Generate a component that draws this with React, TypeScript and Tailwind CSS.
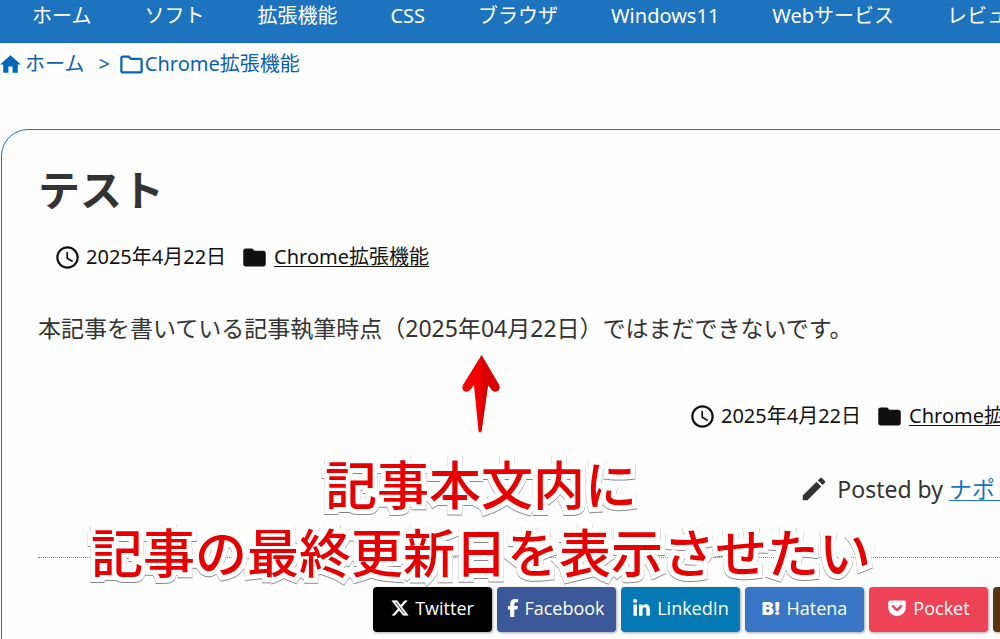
import type { ReactNode } from 'react';
import { MdAccessTime, MdEdit, MdFolder, MdHome, MdOutlineFolder } from 'react-icons/md';
import { FaFacebookF, FaGetPocket, FaLinkedinIn, FaXTwitter } from 'react-icons/fa6';

const NAV = ['ホーム', 'ソフト', '拡張機能', 'CSS', 'ブラウザ', 'Windows11', 'Webサービス', 'レビュー'];

const SHARES: { label: string; color: string; icon: ReactNode }[] = [
  { label: 'Twitter', color: 'bg-black', icon: <FaXTwitter size={18} strokeWidth={16} /> },
  { label: 'Facebook', color: 'bg-[#3b5998]', icon: <FaFacebookF size={18} className="-mx-1" /> },
  { label: 'LinkedIn', color: 'bg-[#0479b4]', icon: <FaLinkedinIn size={19} /> },
  {
    label: 'Hatena',
    color: 'bg-[#3875c4]',
    icon: <span className="font-['Inter',sans-serif] text-[18px] font-black">B!</span>,
  },
  { label: 'Pocket', color: 'bg-[#ee4257]', icon: <FaGetPocket size={20} /> },
];

function Meta({ className }: { className: string }) {
  return (
    <div className={`flex items-center text-[20px] leading-[30px] text-[#111] ${className}`}>
      <MdAccessTime size={27} className="mr-[5px]" />
      <time dateTime="2025-04-22">2025年4月22日</time>
      <MdFolder size={27} className="mr-[6px] ml-[15px]" />
      <a href="#chrome" className="underline decoration-1 underline-offset-2">Chrome拡張機能</a>
    </div>
  );
}

function Arrow() {
  return (
    <svg width="40" height="80" viewBox="0 0 40 80" aria-hidden="true">
      <path
        d="M20.5 1 L38 31 Q39.5 35 36.5 37 Q33 38.500 31 36 L27 31 L20.500 77 Q19 80 17.500 77 L13 31 L9 36 Q6 39 3 37 Q.5 35 2 31 Z"
        fill="#f40000"
      />
      <path
        d="M20.5 1 L38 31 Q39.5 35 36.5 37 Q33 38.500 31 36 L27 31 L20.500 77 L19.500 78 Z"
        fill="#d90000"
      />
    </svg>
  );
}

export default function App() {
  return (
    <div className="h-screen overflow-hidden bg-[#fefefe] font-['Noto_Sans','Noto_Sans_CJK_JP',sans-serif] whitespace-nowrap text-[#333]">
      <nav className="flex gap-[53px] border-b border-[#0b67b5] bg-[#1e73be] pb-[10px] pl-8 text-[20px] leading-8 text-white">
        {NAV.map((item) => (
          <a key={item} href={`#${item}`}>{item}</a>
        ))}
      </nav>

      <div className="flex items-center text-[20px] leading-[42px] text-[#0b5eb0]">
        <a href="#home" className="flex items-center">
          <MdHome size={25} className="-ml-0.5 text-[#0066b8]" />
          <span className="ml-0.5">ホーム</span>
        </a>
        <span className="mr-2 ml-[14px]">&gt;</span>
        <a href="#chrome" className="flex items-center">
          <MdOutlineFolder size={27} className="text-[#0066b8]" />
          Chrome拡張機能
        </a>
      </div>

      <article className="relative -mr-[149px] mt-11 ml-px rounded-[27px] border border-[#1e73be] px-9 pt-[30px] pb-12">
        <h1 className="text-[42px] leading-[60px] font-bold">テスト</h1>
        <Meta className="mt-[22px] pl-4" />
        <p className="mt-9 text-[23px] leading-10">
          本記事を書いている記事執筆時点（2025年04月22日）ではまだできないです。
        </p>
        <Meta className="mt-[53px] justify-end pr-12" />
        <div className="mt-[43px] flex items-center justify-end pr-0.5 text-[23px] leading-[30px]">
          <MdEdit size={30} className="mr-2" />
          <span>Posted by&nbsp;</span>
          <a href="#author" className="text-[#1e73be] underline decoration-1 underline-offset-2">ナポリタン寿司</a>
        </div>
        <div className="mt-[53px] flex justify-end gap-[5px] border-t border-dotted border-[#888] pt-[29px]">
          {SHARES.map((share) => (
            <button
              key={share.label}
              type="button"
              className={`flex h-[45px] w-[119px] items-center justify-center gap-[6px] rounded-[4px] pb-[3px] font-['Open_Sans',sans-serif] text-[18px] text-white shadow-[1px_1px_3px_rgba(0,0,0,0.35)] ${share.color}`}
            >
              {share.icon}
              {share.label}
            </button>
          ))}
          <button
            type="button"
            aria-label="その他"
            className="h-[45px] w-[119px] rounded-[4px] bg-[#54350f] shadow-[1px_1px_3px_rgba(0,0,0,0.35)]"
          />
        </div>

        <div className="absolute top-[224px] left-[89px] flex flex-col items-center">
          <Arrow />
          <p className="mt-[17px] text-center text-[52px] leading-[68px] font-medium text-[#e60000] drop-shadow-[0_1px_0_#888] [-webkit-text-stroke:10px_white] [paint-order:stroke_fill]">
            記事本文内に
            <br />
            記事の最終更新日を表示させたい
          </p>
        </div>
      </article>
    </div>
  );
}
